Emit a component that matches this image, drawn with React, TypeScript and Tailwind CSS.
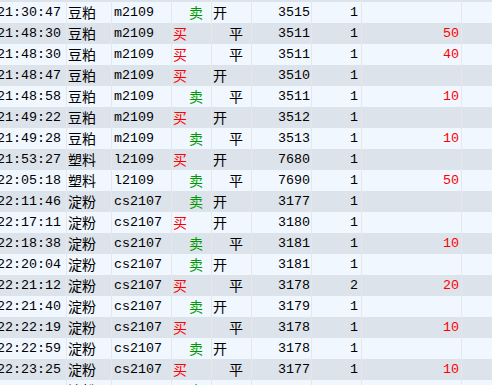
import React from 'react';

interface Trade {
    time: string;
    name: string;
    code: string;
    side: '买' | '卖' | '';
    action: '开' | '平' | '';
    price: number | '';
    qty: number | '';
    profit?: number;
}

const TRADES: Trade[] = [
    // row scrolled out of view, only its bottom edge shows
    { time: '', name: '', code: '', side: '', action: '', price: '', qty: '' },
    { time: '21:30:47', name: '豆粕', code: 'm2109', side: '卖', action: '开', price: 3515, qty: 1 },
    { time: '21:48:30', name: '豆粕', code: 'm2109', side: '买', action: '平', price: 3511, qty: 1, profit: 50 },
    { time: '21:48:30', name: '豆粕', code: 'm2109', side: '买', action: '平', price: 3511, qty: 1, profit: 40 },
    { time: '21:48:47', name: '豆粕', code: 'm2109', side: '买', action: '开', price: 3510, qty: 1 },
    { time: '21:48:58', name: '豆粕', code: 'm2109', side: '卖', action: '平', price: 3511, qty: 1, profit: 10 },
    { time: '21:49:22', name: '豆粕', code: 'm2109', side: '买', action: '开', price: 3512, qty: 1 },
    { time: '21:49:28', name: '豆粕', code: 'm2109', side: '卖', action: '平', price: 3513, qty: 1, profit: 10 },
    { time: '21:53:27', name: '塑料', code: 'l2109', side: '买', action: '开', price: 7680, qty: 1 },
    { time: '22:05:18', name: '塑料', code: 'l2109', side: '卖', action: '平', price: 7690, qty: 1, profit: 50 },
    { time: '22:11:46', name: '淀粉', code: 'cs2107', side: '卖', action: '开', price: 3177, qty: 1 },
    { time: '22:17:11', name: '淀粉', code: 'cs2107', side: '买', action: '开', price: 3180, qty: 1 },
    { time: '22:18:38', name: '淀粉', code: 'cs2107', side: '卖', action: '平', price: 3181, qty: 1, profit: 10 },
    { time: '22:20:04', name: '淀粉', code: 'cs2107', side: '卖', action: '开', price: 3181, qty: 1 },
    { time: '22:21:12', name: '淀粉', code: 'cs2107', side: '买', action: '平', price: 3178, qty: 2, profit: 20 },
    { time: '22:21:40', name: '淀粉', code: 'cs2107', side: '卖', action: '开', price: 3179, qty: 1 },
    { time: '22:22:19', name: '淀粉', code: 'cs2107', side: '买', action: '平', price: 3178, qty: 1, profit: 10 },
    { time: '22:22:59', name: '淀粉', code: 'cs2107', side: '卖', action: '开', price: 3178, qty: 1 },
    { time: '22:23:25', name: '淀粉', code: 'cs2107', side: '买', action: '平', price: 3177, qty: 1, profit: 10 },
    { time: '22:24:10', name: '淀粉', code: 'cs2107', side: '卖', action: '开', price: 3178, qty: 1 },
];

const cell = 'h-full flex items-center border-r border-[#e4e8ed] overflow-hidden whitespace-nowrap';
const cjk = { fontFamily: '"Noto Sans CJK SC", sans-serif' };

const App: React.FC = () => {
    return (
        <div
            className="w-[492px] h-[385px] overflow-hidden bg-[#f0f7ff] text-black text-[13.33px]"
            style={{ fontFamily: '"Liberation Mono", "Noto Sans CJK SC", monospace' }}
        >
            {/* list is scrolled by 19px */}
            <div className="-mt-[19px]">
                {TRADES.map((t, i) => (
                    <div
                        key={i}
                        className={`h-[21px] grid grid-cols-[67px_45px_60px_40px_40px_60px_50px_100px_1fr] ${i % 2 === 0 ? 'bg-[#dde3ea]' : 'bg-[#f0f7ff]'}`}
                    >
                        <div className={`${cell} justify-end pr-[5px]`}>{t.time}</div>
                        <div className={`${cell} pl-[1px]`}>
                            <span className="text-[14px]" style={cjk}>{t.name}</span>
                        </div>
                        <div className={`${cell} pl-[2px]`}>{t.code}</div>
                        <div className={`${cell} ${t.side === '买' ? 'pl-[1px] text-[#ff0000]' : 'pl-[17px] text-[#009a00]'}`}>
                            <span className="text-[14px]" style={cjk}>{t.side}</span>
                        </div>
                        <div className={`${cell} ${t.action === '开' ? 'pl-[1px]' : 'pl-[17px]'}`}>
                            <span className="text-[14px]" style={cjk}>{t.action}</span>
                        </div>
                        <div className={`${cell} justify-end pr-[1px]`}>{t.price}</div>
                        <div className={`${cell} justify-end pr-[3px]`}>{t.qty}</div>
                        <div className={`${cell} justify-end pr-[2px] text-[#ff0000]`}>{t.profit ?? ''}</div>
                        <div className="h-full" />
                    </div>
                ))}
            </div>
        </div>
    );
};

export default App;
